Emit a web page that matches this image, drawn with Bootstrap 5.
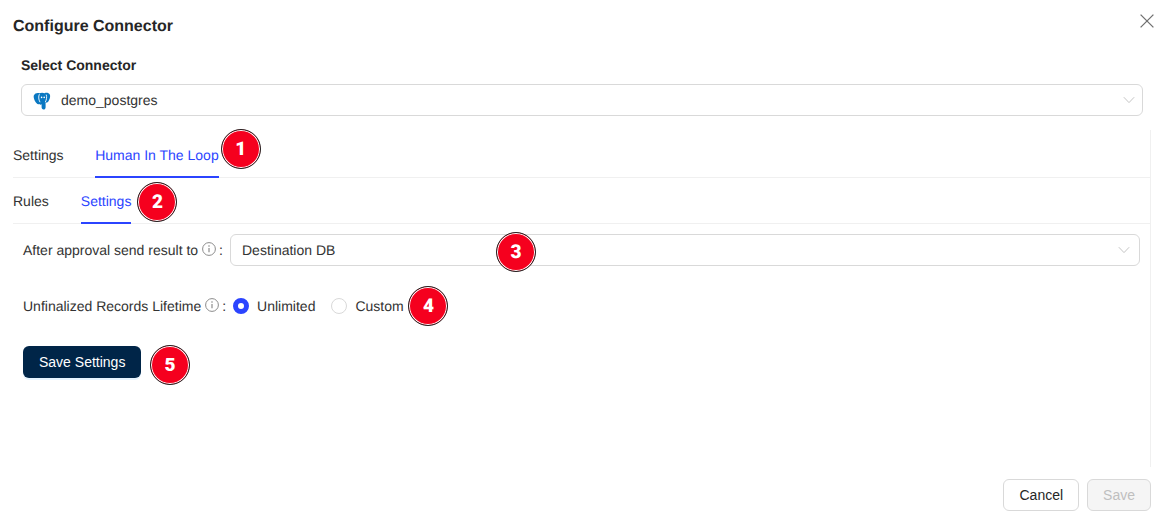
<!DOCTYPE html>
<html lang="en">
<head>
<meta charset="utf-8">
<title>Configure Connector</title>
<link href="https://cdn.jsdelivr.net/npm/bootstrap@5.3.0/dist/css/bootstrap.min.css" rel="stylesheet">
<style>
html,body{height:520px;overflow:hidden;background:#fff;}
body{font-family:"Liberation Sans",Arial,sans-serif;font-size:14px;color:#333;line-height:22px;text-rendering:geometricPrecision;}
.shell{width:1168px;height:520px;position:relative;padding:16px 17px 0 13px;}
.dlg-title{font-size:16px;font-weight:700;line-height:22px;margin:0;height:22px;color:#262626;}
.x-btn{position:absolute;left:1140px;top:14px;width:14px;height:14px;display:block;line-height:0;}
.conn-wrap{padding:16px 8px 0 8px;height:90px;}
.conn-label{font-weight:700;line-height:22px;height:22px;margin-bottom:8px;color:#262626;}
.sel-box{height:32px;border:1px solid #d9d9d9;border-radius:6px;display:flex;align-items:center;background:#fff;padding:0 7px 0 11px;}
.sel-box .val{flex:1 1 auto;}
.panel{border-right:1px solid #f0f0f0;height:337px;margin-top:2px;}
.tabbar{display:flex;gap:31.6px;height:48px;border-bottom:1px solid #f0f0f0;align-items:flex-start;}
.tabbar.sub{height:46px;gap:32px;}
.tab-i{position:relative;height:100%;padding-top:14px;line-height:22px;color:#333;}
.tabbar.sub .tab-i{padding-top:12px;}
.tab-i.on{color:#2b44ff;}
.tab-i.on::after{content:"";position:absolute;left:0;right:0;bottom:-1px;height:2px;background:#2b44ff;}
.form-area{padding:10px 10px 0 10px;}
.frow{display:flex;align-items:center;height:32px;}
.frow+.frow{margin-top:24px;}
.flabel{display:flex;align-items:center;white-space:nowrap;}
.info{margin-left:4px;margin-top:-2px;display:block;}
.colon{margin:0 7px 0 3px;}
.sel-box.grow{flex:1 1 auto;position:relative;padding-right:9px;}
.opt{display:flex;align-items:center;margin-right:16px;}
.rad{width:16px;height:16px;border-radius:50%;border:1px solid #d9d9d9;background:#fff;display:block;margin-right:8px;flex:none;}
.rad.on{border:5px solid #2b44ff;}
.save-set{background:#002548;color:#fff;border:0;border-radius:6px;height:32px;padding:0 16px;font-size:14px;line-height:22px;box-shadow:0 2px 0 rgba(5,145,255,.1);position:relative;}
.save-set:hover{background:#002548;color:#fff;}
.rel{position:relative;}
.num{position:absolute;width:40px;height:40px;border-radius:50%;background:#f5001e;border:1px solid #222;box-shadow:inset 0 0 0 1px #fff;color:#fff;font-family:Roboto,"Liberation Sans",sans-serif;font-weight:900;font-size:19px;line-height:38px;text-align:center;}
.foot{display:flex;justify-content:flex-end;gap:8px;padding-top:12px;}
.foot .btn{height:32px;border-radius:6px;padding:0 15px;font-size:14px;line-height:30px;}
.b-cancel{background:#fff;border:1px solid #d9d9d9;color:#262626;}
.b-save,.b-save:disabled{background:#f5f5f5;border:1px solid #d9d9d9;color:#bfbfbf;opacity:1;}
.pg-ico{margin:2px 10px 0 0;flex:none;}
</style>
</head>
<body>
<div class="shell">
  <h1 class="dlg-title">Configure Connector</h1>
  <svg class="x-btn" viewBox="0 0 14 14" fill="none" stroke="#707070" stroke-width="1.300"><path d="M.6.6l12.800 12.800M13.400.6L.6 13.400"/></svg>
  <div class="conn-wrap">
    <div class="conn-label">Select Connector</div>
    <div class="sel-box">
      <svg class="pg-ico" width="18" height="18" viewBox="0 0 18 18"><path fill="#0a78c2" d="M.8 3.500C1.800 1.200 4.500.5 6.500 1.300c1.600-.8 3.600-.8 5 0 1.800-.9 4.300-.5 5.300 1.200.8 1.500.1 3.800-.7 5.600-.5 1.200-1.200 2.300-2.200 2.500-.5.100-1-.1-1.300-.4v5c0 1.500-1 2.300-2 2.300-1.300 0-2-1.100-2-2.300v-2.900c-.7.600-1.700.5-2.300-.2-1 .5-2.100.2-2.700-.9C2.700 10.200 1.700 8.800 1.200 7.200.8 6 .5 4.600.8 3.500z"/><path fill="none" stroke="#fff" stroke-width=".9" d="M6.400 2.200C5.300 4.400 5.500 7.400 7 10.200M13.200 2.600c.8 2.500.4 5-.9 7.500"/><circle cx="8.600" cy="5.400" r=".8" fill="#fff"/><circle cx="11.200" cy="5.400" r=".8" fill="#fff"/></svg>
      <span class="val">demo_postgres</span>
      <svg width="12" height="8" viewBox="0 0 12 8" fill="none" stroke="#c4c4c4" stroke-width="1"><path d="M.8 1.200L6 6.600l5.200-5.400"/></svg>
    </div>
  </div>
  <div class="panel">
    <div class="tabbar">
      <div class="tab-i">Settings</div>
      <div class="tab-i on">Human In The Loop<span class="num" style="right:-42px;top:-1px">1</span></div>
    </div>
    <div class="tabbar sub">
      <div class="tab-i">Rules</div>
      <div class="tab-i on">Settings<span class="num" style="right:-46px;top:4px">2</span></div>
    </div>
    <div class="form-area">
      <div class="frow">
        <div class="flabel">After approval send result to<svg class="info" width="14" height="14" viewBox="0 0 14 14" fill="none"><circle cx="7" cy="7" r="6.400" stroke="#8c8c8c" stroke-width="1"/><path d="M7 6v4.300" stroke="#8c8c8c" stroke-width="1.200"/><circle cx="7" cy="4" r=".8" fill="#8c8c8c"/></svg><span class="colon">:</span></div>
        <div class="sel-box grow">
          <span class="val">Destination DB</span>
          <svg width="12" height="8" viewBox="0 0 12 8" fill="none" stroke="#c4c4c4" stroke-width="1"><path d="M.8 1.200L6 6.600l5.200-5.400"/></svg>
          <span class="num" style="left:265px;top:-3px">3</span>
        </div>
      </div>
      <div class="frow">
        <div class="flabel">Unfinalized Records Lifetime<svg class="info" width="14" height="14" viewBox="0 0 14 14" fill="none"><circle cx="7" cy="7" r="6.400" stroke="#8c8c8c" stroke-width="1"/><path d="M7 6v4.300" stroke="#8c8c8c" stroke-width="1.200"/><circle cx="7" cy="4" r=".8" fill="#8c8c8c"/></svg><span class="colon">:</span></div>
        <div class="opt"><span class="rad on"></span>Unlimited</div>
        <div class="opt rel"><span class="rad"></span>Custom<span class="num" style="left:77px;top:-9px">4</span></div>
      </div>
      <div class="frow">
        <button type="button" class="btn save-set">Save Settings<span class="num" style="left:127px;top:-1px">5</span></button>
      </div>
    </div>
  </div>
  <div class="foot">
    <button type="button" class="btn b-cancel">Cancel</button>
    <button type="button" class="btn b-save" disabled>Save</button>
  </div>
</div>
<script src="https://cdn.jsdelivr.net/npm/bootstrap@5.3.0/dist/js/bootstrap.bundle.min.js"></script>
</body>
</html>
